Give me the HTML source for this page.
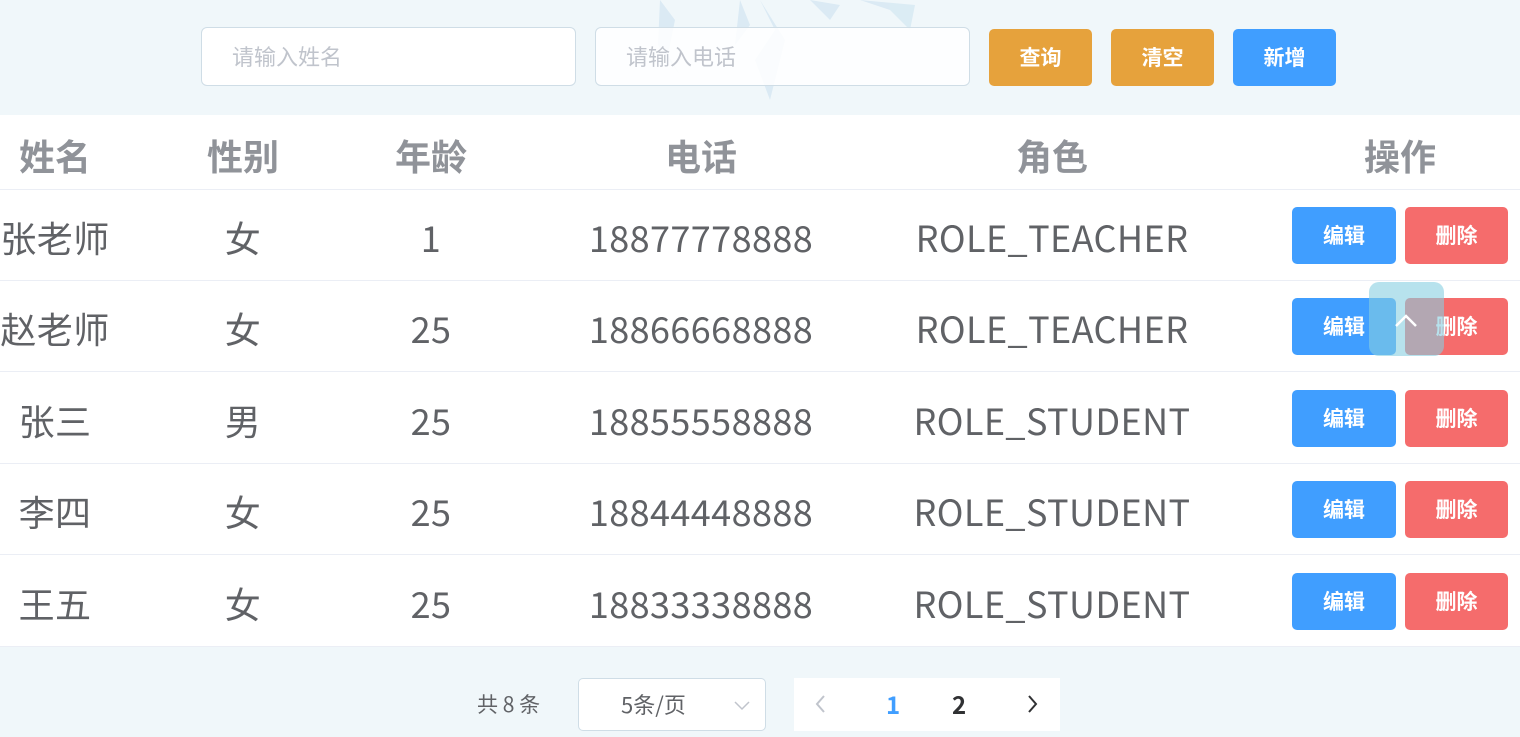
<!DOCTYPE html>
<html><head><meta charset="utf-8"><style>
*{margin:0;padding:0;box-sizing:border-box}
body{width:1520px;height:737px;overflow:hidden;background:#f0f7fa;font-family:"Noto Sans CJK SC","Liberation Sans",sans-serif;position:relative}
.abs{position:absolute}
.inp{position:absolute;top:27px;height:59px;background:#fff;border:1px solid #cfdde6;border-radius:6px;font-size:22px;color:#c0c4cc;padding-left:30px;line-height:57px}
.btn{position:absolute;color:#fff;font-size:21px;font-weight:bold;text-align:center;border-radius:5px}
.tbl{position:absolute;left:0;top:115px;width:1520px;height:531px;background:#fff}
.row{position:absolute;left:0;width:1520px;border-bottom:1px solid #ebeef5}
.c{position:absolute;transform:translateX(-50%);white-space:nowrap;font-size:36px;line-height:36px;color:#606266;letter-spacing:0.4px}
.h .c{color:#909399;font-weight:bold;letter-spacing:0}
</style></head><body>
<svg class="abs" style="left:630px;top:0" width="300" height="105" viewBox="0 0 300 105"><g fill="#d6e8f3" opacity=".8"><path d="M30 0L45 20 38 55 50 75 28 45z"/><path d="M130 0L145 30 125 60 140 100 155 40z"/><path d="M110 0L120 25 105 45z"/><path d="M230 0L260 10 280 30 285 5z"/><path d="M180 0L200 20 210 5z"/></g></svg>
<div class="inp" style="left:201px;width:375px">请输入姓名</div>
<div class="inp" style="left:595px;width:375px;background:rgba(255,255,255,.85)">请输入电话</div>
<div class="btn" style="left:989px;top:29px;width:103px;height:57px;line-height:57px;background:#e6a23c">查询</div>
<div class="btn" style="left:1111px;top:29px;width:103px;height:57px;line-height:57px;background:#e6a23c">清空</div>
<div class="btn" style="left:1233px;top:29px;width:103px;height:57px;line-height:57px;background:#409eff">新增</div>
<div class="tbl">
<div class="row h" style="top:0;height:75px"><div class="c" style="left:55px;top:22px">姓名</div><div class="c" style="left:243px;top:22px">性别</div><div class="c" style="left:431px;top:22px">年龄</div><div class="c" style="left:701px;top:22px">电话</div><div class="c" style="left:1052px;top:22px">角色</div><div class="c" style="left:1400px;top:22px">操作</div></div>
</div>
<div id="rows"></div>
<script>
var d=[["张老师","女","1","18877778888","ROLE_TEACHER"],["赵老师","女","25","18866668888","ROLE_TEACHER"],["张三","男","25","18855558888","ROLE_STUDENT"],["李四","女","25","18844448888","ROLE_STUDENT"],["王五","女","25","18833338888","ROLE_STUDENT"]];
var xs=[55,243,431,701,1052],h="";
d.forEach(function(r,i){var t=189+i*91.4;h+='<div class="row" style="top:'+t+'px;height:92px">';r.forEach(function(v,j){h+='<div class="c" style="left:'+xs[j]+'px;top:30px">'+v+'</div>'});
h+='<div class="btn" style="left:1292px;top:18px;width:104px;height:57px;line-height:57px;background:#409eff">编辑</div><div class="btn" style="left:1405px;top:18px;width:103px;height:57px;line-height:57px;background:#f56c6c">删除</div></div>'});
document.getElementById("rows").innerHTML=h;
</script>
<div class="abs" style="left:1369px;top:282px;width:75px;height:74px;border-radius:10px;background:rgba(135,206,225,.6)"><svg width="75" height="74"><path d="M27 44L37 34 47 44" stroke="#fff" stroke-width="2.5" fill="none"/></svg></div>
<div class="abs" style="left:477px;top:690px;font-size:21px;line-height:28px;color:#606266">共 8 条</div>
<div class="abs" style="left:578px;top:678px;width:188px;height:53px;background:#fff;border:1px solid #cfdde6;border-radius:5px;font-size:22px;color:#606266;line-height:51px;padding-left:42px">5条/页<svg class="abs" style="left:154px;top:20px" width="18" height="12"><path d="M2 3L9 10 16 3" stroke="#c0c4cc" stroke-width="1.5" fill="none"/></svg></div>
<div class="abs" style="left:794px;top:678px;width:266px;height:53px;background:#fff"></div>
<svg class="abs" style="left:814px;top:694px" width="14" height="20"><path d="M10 2L3 10 10 18" stroke="#c0c4cc" stroke-width="2" fill="none"/></svg>
<div class="abs" style="left:886px;top:688px;font-size:24px;line-height:32px;font-weight:bold;color:#409eff">1</div>
<div class="abs" style="left:952px;top:688px;font-size:24px;line-height:32px;font-weight:bold;color:#303133">2</div>
<svg class="abs" style="left:1026px;top:694px" width="14" height="20"><path d="M3 2L10 10 3 18" stroke="#303133" stroke-width="2" fill="none"/></svg>
</body></html>
